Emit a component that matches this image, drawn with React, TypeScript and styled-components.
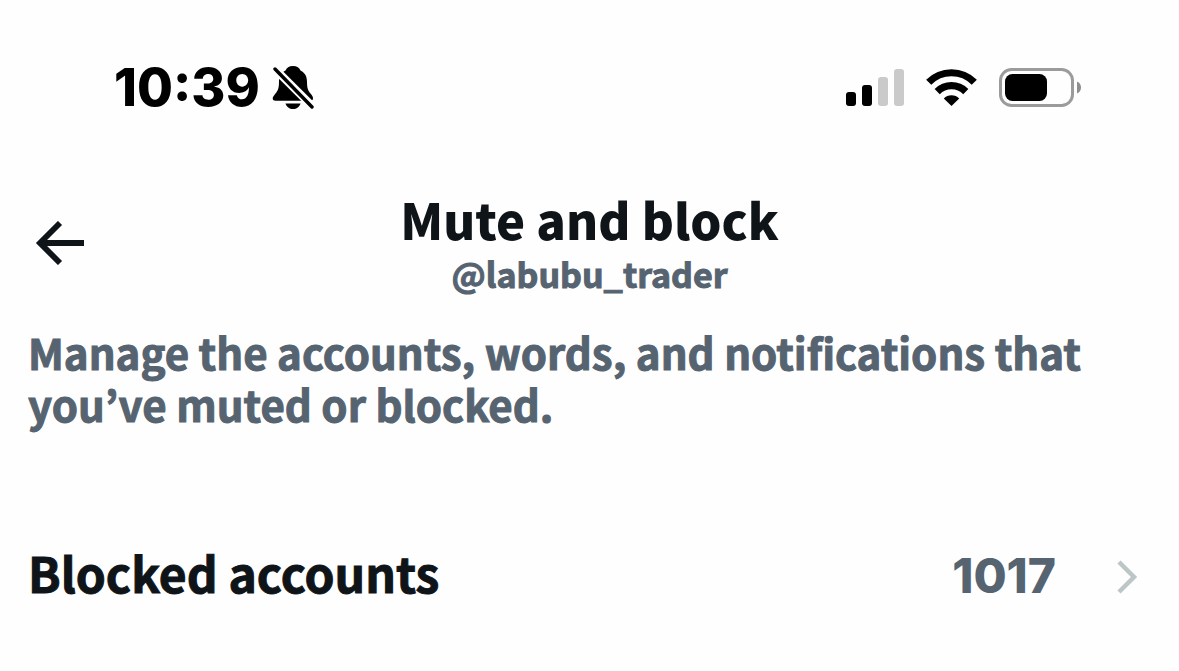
import React from "react";
import styled, { createGlobalStyle } from "styled-components";

const GlobalStyle = createGlobalStyle`
  * { box-sizing: border-box; }
  body {
    margin: 0;
    background: #fefefe;
    color: #0f1419;
    font-family: "Noto Sans CJK KR", "Noto Sans", sans-serif;
    font-weight: 700;
    -webkit-text-stroke: 1px currentColor;
  }
`;

const Screen = styled.div`
  display: flex;
  flex-direction: column;
`;

const StatusBar = styled.div`
  display: flex;
  align-items: center;
  justify-content: space-between;
  padding: 58px 98px 0 114px;
  color: #000;
`;

const StatusGroup = styled.div<{ $gap: number }>`
  display: flex;
  align-items: center;
  gap: ${(p) => p.$gap}px;
`;

const Clock = styled.time`
  font-family: Inter, sans-serif;
  font-size: 52px;
  font-weight: 800;
  line-height: 60px;
  -webkit-text-stroke: 0;
`;

const Header = styled.header`
  display: grid;
  grid-template-columns: 92px 1fr 92px;
  align-items: center;
  padding: 70px 0 0;
`;

const BackButton = styled.button`
  display: flex;
  padding: 0 0 0 34px;
  border: 0;
  background: none;
  color: inherit;
  cursor: pointer;
`;

const Titles = styled.div`
  text-align: center;
`;

const Title = styled.h1`
  margin: 0;
  font-size: 49px;
  font-weight: 900;
  line-height: 62px;
  -webkit-text-stroke: 0;
`;

const Handle = styled.p`
  margin: 0;
  color: #566370;
  font-size: 34px;
  line-height: 48px;
`;

const Description = styled.p`
  margin: 0;
  padding: 28px 28px 0;
  color: #566370;
  font-size: 42px;
  line-height: 52px;
`;

const SettingRow = styled.a`
  display: flex;
  align-items: center;
  margin-top: 112px;
  padding: 0 40px 0 28px;
  color: inherit;
  font-size: 48px;
  line-height: 60px;
  text-decoration: none;
`;

const RowText = styled.span`
  flex: 1;
  display: flex;
  align-items: baseline;
  justify-content: space-between;
  margin-right: 60px;
`;

const RowCount = styled.span`
  color: #566370;
  font-family: Inter, sans-serif;
  font-weight: 800;
  -webkit-text-stroke: 0;
`;

const BellOff = () => (
  <svg width="42" height="46" viewBox="0 0 42 46" aria-label="Silent mode">
    <path
      d="M21 1c-4 0-6.500 2-7.500 4.500C8.500 8 7 12 7 17c0 6-1 8.500-3.500 11.500C1.500 31 .700 32 .700 33.500.700 35 2 35.700 3.500 35.700h34.500c1.800 0 3-.900 3-2.300 0-1.700-1-2.900-2.500-4.800C36 25.500 35 23 35 17c0-5-1.500-9-6.500-11.500C27.500 3 25 1 21 1Z"
      fill="#000"
    />
    <path d="M13.500 38.500h15C27.500 42 24.500 44 21 44s-6.500-2-7.500-5.500Z" fill="#000" />
    <path d="M0 1 42 43" stroke="#fefefe" strokeWidth="8" />
    <path d="M3 4 40 42" stroke="#000" strokeWidth="3.400" strokeLinecap="round" />
  </svg>
);

const Signal = () => (
  <svg width="58" height="38" viewBox="0 0 58 38" aria-label="Signal">
    <rect x="0" y="23" width="10" height="14" rx="3" fill="#000" />
    <rect x="16" y="16" width="10" height="21" rx="3" fill="#000" />
    <rect x="32" y="8" width="10" height="29" rx="3" fill="#cacaca" />
    <rect x="48" y="0" width="10" height="37" rx="3" fill="#cacaca" />
  </svg>
);

const Wifi = () => (
  <svg width="51" height="38" viewBox="0 0 51 38" aria-label="Wi-Fi">
    <g fill="none" stroke="#000" strokeWidth="7.200">
      <path d="M2.700 13.300a32 32 0 0 1 45.600 0" />
      <path d="M11.200 22.600a20.300 20.300 0 0 1 28.600 0" />
    </g>
    <path d="M17.800 29.400a11 11 0 0 1 15.400 0L25.500 37Z" fill="#000" />
  </svg>
);

const Battery = () => (
  <svg width="82" height="40" viewBox="0 0 82 40" aria-label="Battery">
    <rect x="1.500" y="1.500" width="72" height="36" rx="11" fill="none" stroke="#9b9b9b" strokeWidth="3" />
    <rect x="6" y="6" width="42" height="27" rx="7.500" fill="#000" />
    <path d="M78 13.500c2.500 1 4 3.300 4 6s-1.500 5-4 6Z" fill="#8e8e8e" />
  </svg>
);

const Arrow = () => (
  <svg width="51" height="44" viewBox="0 0 51 44" fill="none" stroke="currentColor" strokeWidth="5.800">
    <path d="M26 2 6 22l20 20M6 22h44" />
  </svg>
);

const Chevron = () => (
  <svg width="23" height="40" viewBox="0 0 23 40" fill="none" stroke="#bcc6c7" strokeWidth="4.500" aria-hidden="true">
    <path d="m3 8 15 15L3 38" />
  </svg>
);

export default function App() {
  return (
    <>
      <GlobalStyle />
      <Screen>
        <StatusBar>
          <StatusGroup $gap={12}>
            <Clock>10:39</Clock>
            <BellOff />
          </StatusGroup>
          <StatusGroup $gap={22}>
            <Signal />
            <Wifi />
            <Battery />
          </StatusGroup>
        </StatusBar>
        <Header>
          <BackButton type="button" aria-label="Back">
            <Arrow />
          </BackButton>
          <Titles>
            <Title>Mute and block</Title>
            <Handle>@labubu_trader</Handle>
          </Titles>
        </Header>
        <main>
          <Description>
            Manage the accounts, words, and notifications that you’ve muted or blocked.
          </Description>
          <SettingRow href="#blocked">
            <RowText>
              <span>Blocked accounts</span>
              <RowCount>1017</RowCount>
            </RowText>
            <Chevron />
          </SettingRow>
        </main>
      </Screen>
    </>
  );
}
